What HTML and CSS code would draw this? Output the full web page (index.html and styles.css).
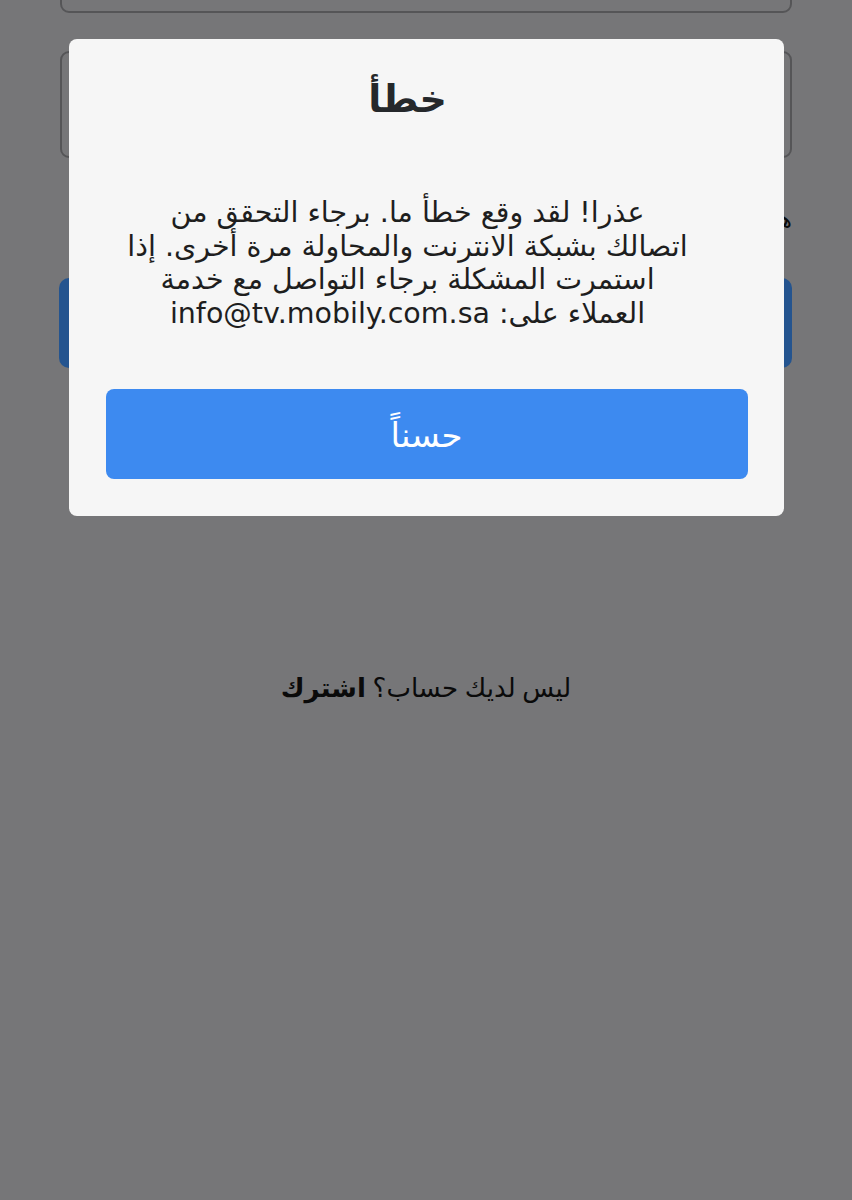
FILE: index.html
```html
<!DOCTYPE html>
<html lang="ar" dir="rtl">
<head>
<meta charset="utf-8">
<title>خطأ</title>
<link rel="stylesheet" href="styles.css">
</head>
<body>
<main class="page">
  <div class="field field-top"></div>
  <div class="field field-pass"></div>
  <div class="forgot">هل نسيت كلمة المرور؟</div>
  <div class="login-btn"></div>
  <p class="signup">ليس لديك حساب؟ <b>اشترك</b></p>
</main>
<div class="overlay">
  <section class="dialog">
    <h1 class="dialog-title">خطأ</h1>
    <p class="dialog-text">عذرا! لقد وقع خطأ ما. برجاء التحقق من<br>اتصالك بشبكة الانترنت والمحاولة مرة أخرى. إذا<br>استمرت المشكلة برجاء التواصل مع خدمة<br>العملاء على: info@tv.mobily.com.sa</p>
    <button class="dialog-btn">حسناً</button>
  </section>
</div>
</body>
</html>
```

FILE: styles.css
```css
html, body {
  margin: 0;
  padding: 0;
}
body {
  width: 852px;
  height: 1200px;
  overflow: hidden;
  background: #c5c5c8;
  font-family: "Noto Sans", "DejaVu Sans", sans-serif;
  color: #222;
}
.page {
  padding: 0 60px;
  display: flex;
  flex-direction: column;
}
.field {
  border: 2px solid #8e8e92;
  border-radius: 9px;
  box-sizing: border-box;
  background: #c5c5c8;
}
.field-top {
  height: 100px;
  margin-top: -87px;
}
.field-pass {
  height: 107px;
  margin-top: 38px;
}
.forgot {
  margin-top: 44px;
  height: 32px;
  line-height: 32px;
  font-size: 24px;
  color: #111;
}
.login-btn {
  margin-top: 44px;
  height: 90px;
  margin-left: -1px;
  border-radius: 10px;
  background: #3c8cee;
}
.signup {
  margin: 302px 0 0;
  text-align: center;
  font-size: 26px;
  line-height: 34px;
  color: #111;
}
.signup b {
  font-weight: 700;
}
.overlay {
  position: fixed;
  inset: 0;
  background: rgba(0, 0, 0, 0.4);
  display: flex;
  justify-content: center;
  align-items: flex-start;
  padding-top: 39px;
}
.dialog {
  width: 715px;
  box-sizing: border-box;
  background: #f6f6f6;
  border-radius: 8px;
  padding: 32px 36px 37px 37px;
  display: flex;
  flex-direction: column;
  align-items: stretch;
}
.dialog-title {
  margin: 0;
  padding-right: 38px;
  text-align: center;
  font-size: 38px;
  line-height: 52px;
  font-weight: 700;
  color: #25282b;
}
.dialog-text {
  margin: 73px 0 0;
  padding-right: 38px;
  text-align: center;
  font-family: "DejaVu Sans", sans-serif;
  font-size: 28.5px;
  line-height: 33.5px;
  color: #1e1e1e;
}
.dialog-btn {
  margin-top: 59px;
  height: 90px;
  border: none;
  border-radius: 8px;
  background: #3d8af0;
  color: #fff;
  font-family: inherit;
  font-size: 34px;
  cursor: pointer;
}
```
